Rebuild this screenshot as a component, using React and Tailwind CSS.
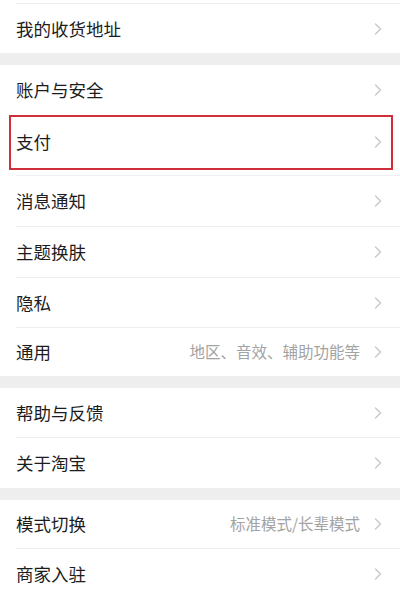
import React from "react";

const font = {
  fontFamily: '"Noto Sans CJK SC", "Noto Sans", sans-serif',
};

function Chevron() {
  return (
    <svg width="8" height="12" viewBox="0 0 8 12" fill="none" className="shrink-0">
      <path d="M1.5 1 L6.5 6 L1.5 11" stroke="#c8c8c8" strokeWidth="1.4" strokeLinecap="round" strokeLinejoin="round" />
    </svg>
  );
}

function Row({ label, hint, h }) {
  return (
    <div className={`flex items-center justify-between pl-4 pr-[18px] bg-white ${h}`}>
      <span className="text-[17.5px] text-[#1c1c1c] leading-none">{label}</span>
      <div className="flex items-center gap-[14px]">
        {hint && <span className="text-[15.5px] text-[#a3a3a3] leading-none">{hint}</span>}
        <Chevron />
      </div>
    </div>
  );
}

const Divider = () => (
  <div className="bg-white">
    <div className="ml-4 h-px bg-[#efefef]" />
  </div>
);

const Gap = () => <div className="h-[12px] bg-[#eeeeee]" />;

export default function App() {
  return (
    <div className="w-[400px] h-[593px] overflow-hidden bg-white" style={font}>
      <div className="h-[3px] bg-white" />
      <Divider />
      <Row label="我的收货地址" h="h-[49px]" />
      <Gap />
      <Row label="账户与安全" h="h-[50px]" />

      {/* 支付 highlighted */}
      <div className="h-[60px] bg-white">
        <div className="ml-[9px] mr-[7px] h-[55px] pb-[2px] border-2 border-[#cf2f3a] flex items-center justify-between pl-[5px] pr-[9px]">
          <span className="text-[17.5px] text-[#1c1c1c] leading-none">支付</span>
          <Chevron />
        </div>
      </div>
      <Divider />
      <Row label="消息通知" h="h-[50px]" />
      <Divider />
      <Row label="主题换肤" h="h-[50px]" />
      <Divider />
      <Row label="隐私" h="h-[49px]" />
      <Divider />
      <Row label="通用" hint="地区、音效、辅助功能等" h="h-[48px]" />
      <Gap />
      <Row label="帮助与反馈" h="h-[49px]" />
      <Divider />
      <Row label="关于淘宝" h="h-[50px]" />
      <Gap />
      <Row label="模式切换" hint="标准模式/长辈模式" h="h-[48px]" />
      <Divider />
      <Row label="商家入驻" h="h-[50px]" />
    </div>
  );
}
